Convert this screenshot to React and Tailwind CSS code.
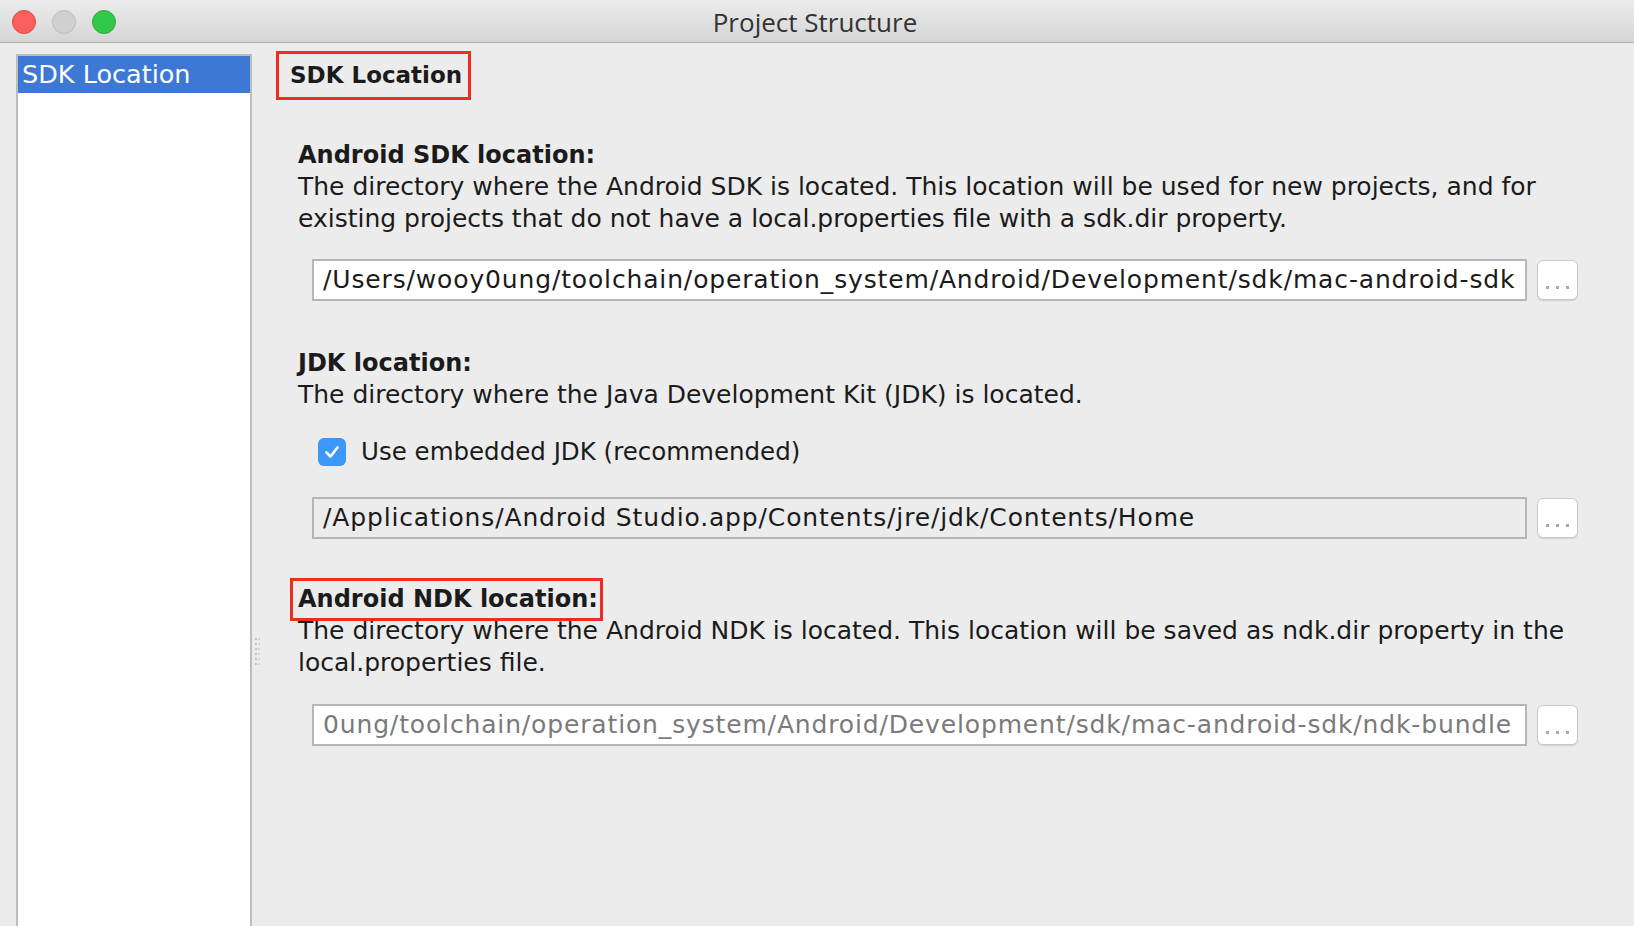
import React from "react";

function Dots() {
  return (
    <div className="flex items-end justify-center gap-[7px] w-[41px] h-[40px] pb-[10px] bg-white border border-[#c9c9c9] rounded-[6px] shadow-[0_1px_1px_rgba(0,0,0,0.12)] shrink-0">
      <div className="w-[3px] h-[3px] bg-[#ababab]"></div>
      <div className="w-[3px] h-[3px] bg-[#ababab]"></div>
      <div className="w-[3px] h-[3px] bg-[#ababab]"></div>
    </div>
  );
}

function PathField({ value, bg, color }) {
  return (
    <div className="flex items-center gap-[10px] ml-[36px] mr-[56px]">
      <div className={`flex-1 h-[42px] border-2 border-[#b6b6b6] ${bg} flex items-center pl-[9px] overflow-hidden whitespace-nowrap text-[25px] tracking-[0.85px] ${color}`}>
        {value}
      </div>
      <Dots />
    </div>
  );
}

export default function App() {
  return (
    <main className="w-[1634px] h-[926px] bg-[#ececec] flex flex-col overflow-hidden text-[#1b1b1b]" style={{ fontFamily: "'DejaVu Sans', Verdana, sans-serif" }}>
      {/* title bar */}
      <header className="relative h-[43px] shrink-0 bg-gradient-to-b from-[#ececec] to-[#d5d5d5] border-b border-[#b1b1b1] flex items-center justify-center">
        <div className="absolute left-[12px] top-[10px] flex gap-[16px]">
          <div className="w-[24px] h-[24px] rounded-full bg-[#fc605c] border border-[#df4844]"></div>
          <div className="w-[24px] h-[24px] rounded-full bg-[#d0d0d0] border border-[#bcbcbc]"></div>
          <div className="w-[24px] h-[24px] rounded-full bg-[#34c84a] border border-[#28a93a]"></div>
        </div>
        <span className="text-[26px] text-[#333] pt-[2px] pr-[4px]" style={{ fontFamily: "'Open Sans', Arial, sans-serif" }}>Project Structure</span>
      </header>

      <div className="flex flex-1 min-h-0">
        {/* sidebar */}
        <div className="pl-[16px] pt-[11px] flex shrink-0">
          <div className="w-[236px] bg-white border-2 border-b-0 border-[#bdbdbd]">
            <div className="h-[37px] bg-[#3d78d5] text-white text-[25.5px] leading-[37px] pl-[4px]">SDK Location</div>
          </div>
        </div>

        {/* splitter */}
        <div className="w-[24px] shrink-0 pt-[595px] pl-[3px]">
          <div className="grid grid-cols-2 gap-x-[1px] gap-y-[3px] w-[5px]">
            {Array.from({ length: 12 }).map((_, i) => (
              <div key={i} className={`w-[2px] h-[2px] ${i % 2 === 0 ? "bg-[#c4c4c4]" : "bg-[#d6d6d6]"}`}></div>
            ))}
          </div>
        </div>

        {/* content */}
        <section className="flex-1 flex flex-col pt-[8px]">
          <div className="self-start border-[3px] border-[#f02b23] h-[49px] w-[195px] pl-[11px] flex items-center">
            <span className="text-[23px] font-bold leading-none whitespace-nowrap">SDK Location</span>
          </div>

          <div className="mt-[39px] pl-[22px] pr-[50px]">
            <h2 className="text-[24px] font-bold leading-[32px]">Android SDK location:</h2>
            <p className="text-[25px] leading-[32px]">
              The directory where the Android SDK is located. This location will be used for new projects, and for existing projects that do not have a local.properties file with a sdk.dir property.
            </p>
          </div>
          <div className="mt-[24px]">
            <PathField value="/Users/wooy0ung/toolchain/operation_system/Android/Development/sdk/mac-android-sdk" bg="bg-white" color="text-[#1b1b1b]" />
          </div>

          <div className="mt-[46px] pl-[22px] pr-[50px]">
            <h2 className="text-[24px] font-bold leading-[32px]">JDK location:</h2>
            <p className="text-[25px] leading-[32px]">The directory where the Java Development Kit (JDK) is located.</p>
          </div>
          <label className="mt-[27px] ml-[42px] flex items-center gap-[15px] text-[24.5px] leading-[28px]">
            <span className="w-[28px] h-[28px] rounded-[6px] bg-[#3d96f9] flex items-center justify-center">
              <svg width="18" height="18" viewBox="0 0 18 18" fill="none">
                <path d="M3.5 9.5 L7.5 13.5 L14.5 4.5" stroke="white" strokeWidth="2.6" strokeLinecap="round" strokeLinejoin="round" />
              </svg>
            </span>
            Use embedded JDK (recommended)
          </label>
          <div className="mt-[31px]">
            <PathField value="/Applications/Android Studio.app/Contents/jre/jdk/Contents/Home" bg="bg-[#ececec]" color="text-[#1b1b1b]" />
          </div>

          <div className="mt-[44px] pl-[22px] pr-[50px]">
            <div className="relative self-start inline-block">
              <h2 className="text-[24px] font-bold leading-[32px]">Android NDK location:</h2>
              <div className="absolute -left-[8px] -top-[5px] -right-[5px] -bottom-[6px] border-[3px] border-[#f02b23]"></div>
            </div>
            <p className="text-[25px] leading-[32px]">
              The directory where the Android NDK is located. This location will be saved as ndk.dir property in the local.properties file.
            </p>
          </div>
          <div className="mt-[25px]">
            <PathField value="0ung/toolchain/operation_system/Android/Development/sdk/mac-android-sdk/ndk-bundle" bg="bg-white" color="text-[#7a7a7a]" />
          </div>
        </section>
      </div>
    </main>
  );
}
